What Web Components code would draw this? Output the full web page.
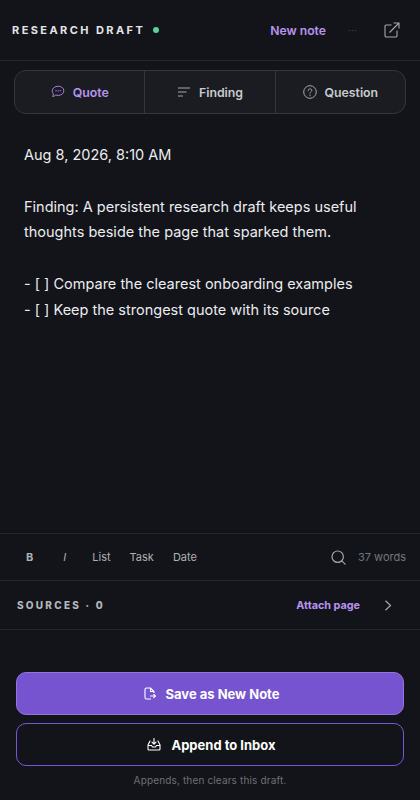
<!DOCTYPE html>
<html><head><meta charset="utf-8">
<style>
html,body{margin:0;padding:0;background:#121419;}
body{font-family:Inter,"Liberation Sans",sans-serif;color:#e8e9ec;width:420px;height:800px;overflow:hidden;}
</style></head><body>
<draft-app></draft-app>
<script>
const ico={
quote:'<svg width="14" height="14" viewBox="0 0 14 14" fill="none" stroke="currentColor" stroke-width="1"><path d="M7.200 1.200c3.200 0 5.600 1.900 5.600 4.600s-2.400 4.600-5.600 4.600c-.9 0-1.700-.1-2.400-.4-.8.9-1.900 1.300-3.300 1.400.6-.8.9-1.500.9-2.500C1.500 8.200 1.300 7 1.300 5.800c0-2.700 2.700-4.600 5.900-4.600z"/><path d="M4.700 5.800h.6M6.900 5.800h.6M9.100 5.800h.6" stroke-linecap="round"/></svg>',
finding:'<svg width="14" height="12" viewBox="0 0 14 12" fill="none" stroke="currentColor" stroke-width="1"><path d="M1 2h12M1 6h8.500M1 10h5"/></svg>',
question:'<svg width="14" height="14" viewBox="0 0 14 14" fill="none" stroke="currentColor" stroke-width="1"><circle cx="7" cy="7" r="6.300"/><path d="M5.200 5.500c0-1 .8-1.700 1.800-1.700s1.800.7 1.800 1.600c0 1.300-1.800 1.400-1.800 2.700" stroke-linecap="round"/><path d="M7 9.900v.6" stroke-linecap="round"/></svg>',
ext:'<svg width="16" height="16" viewBox="0 0 16 16" fill="none" stroke="currentColor" stroke-width="1.100"><path d="M7.500 3H2.300C1.600 3 1 3.600 1 4.300v9.400c0 .7.600 1.300 1.300 1.300h9.400c.7 0 1.300-.6 1.300-1.300V8.500"/><path d="M5.500 10.500 15 1M9.500 1H15v5.500"/></svg>',
search:'<svg width="15" height="15" viewBox="0 0 15 15" fill="none" stroke="currentColor" stroke-width="1.200"><circle cx="6.700" cy="6.700" r="5.700"/><path d="m10.800 10.800 3.300 3.300" stroke-linecap="round"/></svg>',
chev:'<svg width="8" height="11" viewBox="0 0 8 11" fill="none" stroke="currentColor" stroke-width="1.200"><path d="m1.500 .8 5 4.700-5 4.700"/></svg>',
save:'<svg width="12" height="13" viewBox="0 0 12 13" fill="none" stroke="currentColor" stroke-width="1.100"><path d="M7 12H2.500C1.700 12 1 11.300 1 10.500v-8C1 1.700 1.700 1 2.500 1h4L10 4.500v1.500M6.500 1v3.500H10"/><path d="M6.500 9h5M9.800 7.300 11.500 9l-1.700 1.700" stroke-linecap="round"/></svg>',
inbox:'<svg width="14" height="13" viewBox="0 0 14 13" fill="none" stroke="currentColor" stroke-width="1.100"><path d="M3.500 3H3L1 7v4c0 .6.400 1 1 1h10c.6 0 1-.4 1-1V7l-2-4h-.5M1 7.500h3.500l1 1.500h3l1-1.500H13"/><path d="M7 .5v5.500M5 4.200 7 6.200l2-2" stroke-linecap="round"/></svg>'
};
function def(name,css,html){
 customElements.define(name,class extends HTMLElement{
  constructor(){super();this.attachShadow({mode:'open'}).innerHTML='<style>'+css+'</style>'+(typeof html==='function'?html(this):html);}
 });
}
def('top-bar',`:host{display:flex;align-items:center;height:61px;box-sizing:border-box;border-bottom:1px solid #25272c;padding:0 0 0 12px}
.t{font-size:11px;font-weight:700;letter-spacing:2.42px;color:#e4e5e8;white-space:nowrap}
.d{width:6px;height:6px;border-radius:50%;background:#5fce97;margin-left:8px}
.s{flex:1}
.n{font-size:12.200px;font-weight:600;color:#b794f0;margin-right:22px}
.m{font-size:9px;color:#4a4c52;letter-spacing:.5px;margin-right:21px;line-height:1;width:15px}
.e{color:#a5a7ac;display:flex;margin-right:20px}`,
`<span class="t">RESEARCH DRAFT</span><span class="d"></span><span class="s"></span><span class="n">New note</span><span class="m">···</span><span class="e">${ico.ext}</span>`);
def('mode-tabs',`:host{display:flex;box-sizing:border-box;height:44px;margin:9px 14px 0;border:1px solid #33363c;border-radius:12px;background:#1a1c21;overflow:hidden}`,`<slot></slot>`);
def('mode-tab',`:host{flex:1;display:flex;align-items:center;justify-content:center;gap:8px;font-size:12.300px;font-weight:600;color:#c8cace;border-left:1px solid #33363c}
:host(:first-child){border-left:0}
:host([active]){color:#b794f0}
.i{display:flex;color:#a5a7ac}
:host([active]) .i{color:#a67fe8}`,
h=>`<span class="i">${ico[h.getAttribute('icon')]}</span><slot></slot>`);
def('draft-text',`:host{display:block;box-sizing:border-box;height:419px;padding:28px 24px 0;font-size:14.500px;line-height:25.830px;color:#ebecef;white-space:pre}`,`<slot></slot>`);
def('format-bar',`:host{display:flex;align-items:center;height:48px;box-sizing:border-box;border-top:1px solid #25272c;border-bottom:1px solid #25272c;font-size:11px;color:#aeb0b6;padding:0 14px 0 0}
.b{font-weight:700;margin-left:26px}.i{font-style:italic;margin-left:30px}
.l{margin-left:26px}.k{margin-left:19px}.a{margin-left:19px}
.s{flex:1}.q{display:flex;color:#a5a7ac;margin-right:12px}.w{color:#73767c}`,
`<span class="b">B</span><span class="i">I</span><span class="l">List</span><span class="k">Task</span><span class="a">Date</span><span class="s"></span><span class="q">${ico.search}</span><span class="w">37 words</span>`);
def('sources-bar',`:host{display:flex;align-items:center;height:49px;box-sizing:border-box;border-bottom:1px solid #25272c;padding:0 28px 0 17px}
.t{font-size:10px;font-weight:800;letter-spacing:2.250px;color:#b4b6bb}.s{flex:1}
.a{font-size:10.800px;font-weight:700;color:#b794f0;margin-right:24px}.c{display:flex;color:#a5a7ac}`,
`<span class="t">SOURCES · 0</span><span class="s"></span><span class="a">Attach page</span><span class="c">${ico.chev}</span>`);
def('action-btn',`:host{display:flex;align-items:center;justify-content:center;gap:10px;box-sizing:border-box;height:43px;padding-left:3px;border-radius:10px;font-size:13px;font-weight:700;color:#fff;border:1px solid #7a55d8}
:host([primary]){background:#7654d0;border-color:#9274de}
.i{display:flex}`,
h=>`<span class="i">${ico[h.getAttribute('icon')]}</span><slot></slot>`);
def('action-panel',`:host{display:flex;flex-direction:column;gap:8px;padding:42px 16px 0}
.h{font-size:10px;color:#6e7076;text-align:center;letter-spacing:.15px}`,
`<slot></slot><div class="h">Appends, then clears this draft.</div>`);
def('draft-app',`:host{display:block;width:420px;height:800px;background:#121419}`,
`<top-bar></top-bar>
<mode-tabs><mode-tab active icon="quote">Quote</mode-tab><mode-tab icon="finding">Finding</mode-tab><mode-tab icon="question">Question</mode-tab></mode-tabs>
<draft-text>Aug 8, 2026, 8:10 AM

Finding: A persistent research draft keeps useful
thoughts beside the page that sparked them.

- [ ] Compare the clearest onboarding examples
- [ ] Keep the strongest quote with its source</draft-text>
<format-bar></format-bar>
<sources-bar></sources-bar>
<action-panel><action-btn primary icon="save">Save as New Note</action-btn><action-btn icon="inbox">Append to Inbox</action-btn></action-panel>`);
</script>
</body></html>
